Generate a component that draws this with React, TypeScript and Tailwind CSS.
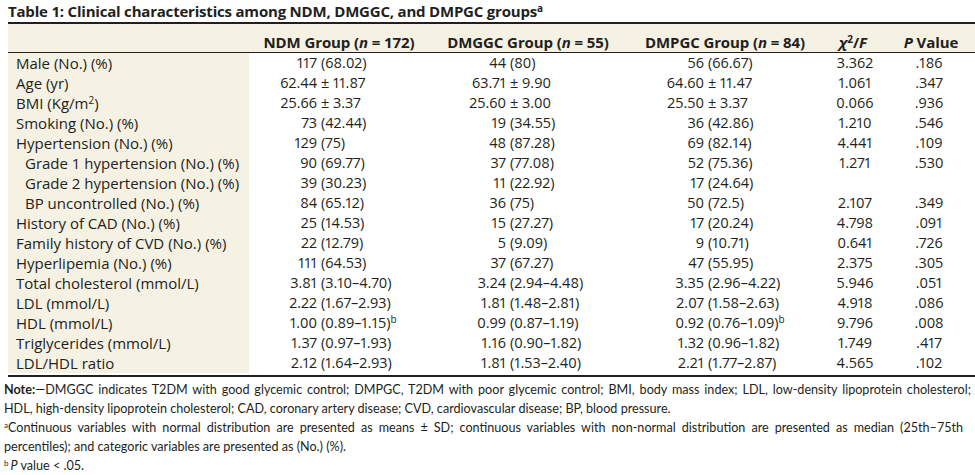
import type { ReactNode } from "react";

type Pair = [string, string];

interface Row {
  label: ReactNode;
  indent?: boolean;
  ndm: Pair;
  ggc: Pair;
  pgc: Pair;
  sup?: number[];
  chi?: string;
  p?: string;
}

const ROWS: Row[] = [
  { label: "Male (No.) (%)", ndm: ["117", "(68.02)"], ggc: ["44", "(80)"], pgc: ["56", "(66.67)"], chi: "3.362", p: ".186" },
  { label: "Age (yr)", ndm: ["62.44", "± 11.87"], ggc: ["63.71", "± 9.90"], pgc: ["64.60", "± 11.47"], chi: "1.061", p: ".347" },
  {
    label: (
      <>
        BMI (Kg/m<sup className="text-[10px]">2</sup>)
      </>
    ),
    ndm: ["25.66", "± 3.37"],
    ggc: ["25.60", "± 3.00"],
    pgc: ["25.50", "± 3.37"],
    chi: "0.066",
    p: ".936",
  },
  { label: "Smoking (No.) (%)", ndm: ["73", "(42.44)"], ggc: ["19", "(34.55)"], pgc: ["36", "(42.86)"], chi: "1.210", p: ".546" },
  { label: "Hypertension (No.) (%)", ndm: ["129", "(75)"], ggc: ["48", "(87.28)"], pgc: ["69", "(82.14)"], chi: "4.441", p: ".109" },
  { label: "Grade 1 hypertension (No.) (%)", indent: true, ndm: ["90", "(69.77)"], ggc: ["37", "(77.08)"], pgc: ["52", "(75.36)"], chi: "1.271", p: ".530" },
  { label: "Grade 2 hypertension (No.) (%)", indent: true, ndm: ["39", "(30.23)"], ggc: ["11", "(22.92)"], pgc: ["17", "(24.64)"] },
  { label: "BP uncontrolled (No.) (%)", indent: true, ndm: ["84", "(65.12)"], ggc: ["36", "(75)"], pgc: ["50", "(72.5)"], chi: "2.107", p: ".349" },
  { label: "History of CAD (No.) (%)", ndm: ["25", "(14.53)"], ggc: ["15", "(27.27)"], pgc: ["17", "(20.24)"], chi: "4.798", p: ".091" },
  { label: "Family history of CVD (No.) (%)", ndm: ["22", "(12.79)"], ggc: ["5", "(9.09)"], pgc: ["9", "(10.71)"], chi: "0.641", p: ".726" },
  { label: "Hyperlipemia (No.) (%)", ndm: ["111", "(64.53)"], ggc: ["37", "(67.27)"], pgc: ["47", "(55.95)"], chi: "2.375", p: ".305" },
  { label: "Total cholesterol (mmol/L)", ndm: ["3.81", "(3.10–4.70)"], ggc: ["3.24", "(2.94–4.48)"], pgc: ["3.35", "(2.96–4.22)"], chi: "5.946", p: ".051" },
  { label: "LDL (mmol/L)", ndm: ["2.22", "(1.67–2.93)"], ggc: ["1.81", "(1.48–2.81)"], pgc: ["2.07", "(1.58–2.63)"], chi: "4.918", p: ".086" },
  { label: "HDL (mmol/L)", ndm: ["1.00", "(0.89–1.15)"], ggc: ["0.99", "(0.87–1.19)"], pgc: ["0.92", "(0.76–1.09)"], sup: [0, 2], chi: "9.796", p: ".008" },
  { label: "Triglycerides (mmol/L)", ndm: ["1.37", "(0.97–1.93)"], ggc: ["1.16", "(0.90–1.82)"], pgc: ["1.32", "(0.96–1.82)"], chi: "1.749", p: ".417" },
  { label: "LDL/HDL ratio", ndm: ["2.12", "(1.64–2.93)"], ggc: ["1.81", "(1.53–2.40)"], pgc: ["2.21", "(1.77–2.87)"], chi: "4.565", p: ".102" },
];

function ValueCell({ pair, leftW, sup }: { pair: Pair; leftW: string; sup?: boolean }) {
  return (
    <div className="flex gap-1 whitespace-nowrap">
      <span className={`${leftW} text-right`}>{pair[0]}</span>
      <span>
        {pair[1]}
        {sup && <sup className="text-[10px]">b</sup>}
      </span>
    </div>
  );
}

export default function App() {
  return (
    <div className="w-[975px] h-[475px] overflow-hidden bg-white text-[#231f20] font-['Open_Sans','Lato',sans-serif]">
      {/* Title */}
      <div className="h-[22px] pl-2 pt-[1px] text-[15px] leading-[20px] font-bold whitespace-nowrap tracking-[-0.2px]">
        Table 1: Clinical characteristics among NDM, DMGGC, and DMPGC groups
        <sup className="text-[10px]">a</sup>
      </div>

      {/* Table */}
      <div className="ml-2 border-t-2 border-b-2 border-[#231f20] text-[15px]">
        <div className="grid grid-cols-[241px_180px_198px_196px_60px_92px] h-[28.5px] items-end bg-[#f5f1e3] border-b-[1.5px] border-[#231f20] font-bold leading-[20px] whitespace-nowrap tracking-[-0.1px]">
          <div />
          <div className="text-center">
            NDM Group (<i>n</i> = 172)
          </div>
          <div className="text-center">
            DMGGC Group (<i>n</i> = 55)
          </div>
          <div className="text-center">
            DMPGC Group (<i>n</i> = 84)
          </div>
          <div className="text-center">
            <i>χ</i>
            <sup className="text-[10px]">2</sup>/<i>F</i>
          </div>
          <div className="text-center pl-1">
            <i>P</i> Value
          </div>
        </div>

        <div className="pb-[2px]">
          {ROWS.map((r, i) => (
            <div
              key={i}
              className="grid grid-cols-[241px_180px_198px_196px_60px_92px] h-[20px] leading-[20px]"
            >
              <div className={`bg-[#f5f1e3] whitespace-nowrap ${r.indent ? "pl-[17px]" : "pl-2"}`}>
                {r.label}
              </div>
              <div className="contents text-[14.5px] proportional-nums">
                <ValueCell pair={r.ndm} leftW="w-[68px]" sup={r.sup?.includes(0)} />
                <ValueCell pair={r.ggc} leftW="w-[77px]" sup={r.sup?.includes(1)} />
                <ValueCell pair={r.pgc} leftW="w-[77px]" sup={r.sup?.includes(2)} />
                <div className="text-center pl-1">{r.chi}</div>
                <div className="text-center">{r.p}</div>
              </div>
            </div>
          ))}
        </div>
      </div>

      {/* Notes */}
      <div className="mt-[3.5px] pl-1 w-[971px] text-[12.6px] leading-[19px] font-['Lato',sans-serif]">
        <div className="text-justify [text-align-last:justify]">
          <b>Note:</b>—DMGGC indicates T2DM with good glycemic control; DMPGC, T2DM with poor glycemic control; BMI, body mass index; LDL, low-density lipoprotein cholesterol;
        </div>
        <div className="whitespace-nowrap">
          HDL, high-density lipoprotein cholesterol; CAD, coronary artery disease; CVD, cardiovascular disease; BP, blood pressure.
        </div>
        <div className="whitespace-nowrap [word-spacing:2.8px]">
          <sup className="text-[8px]">a</sup>Continuous variables with normal distribution are presented as means ± SD; continuous variables with non-normal distribution are presented as median (25th–75th
        </div>
        <div className="whitespace-nowrap">percentiles); and categoric variables are presented as (No.) (%).</div>
        <div className="whitespace-nowrap">
          <sup className="text-[8px]">b</sup>
          <span className="pl-[2px]">
            <i>P</i> value &lt; .05.
          </span>
        </div>
      </div>
    </div>
  );
}
